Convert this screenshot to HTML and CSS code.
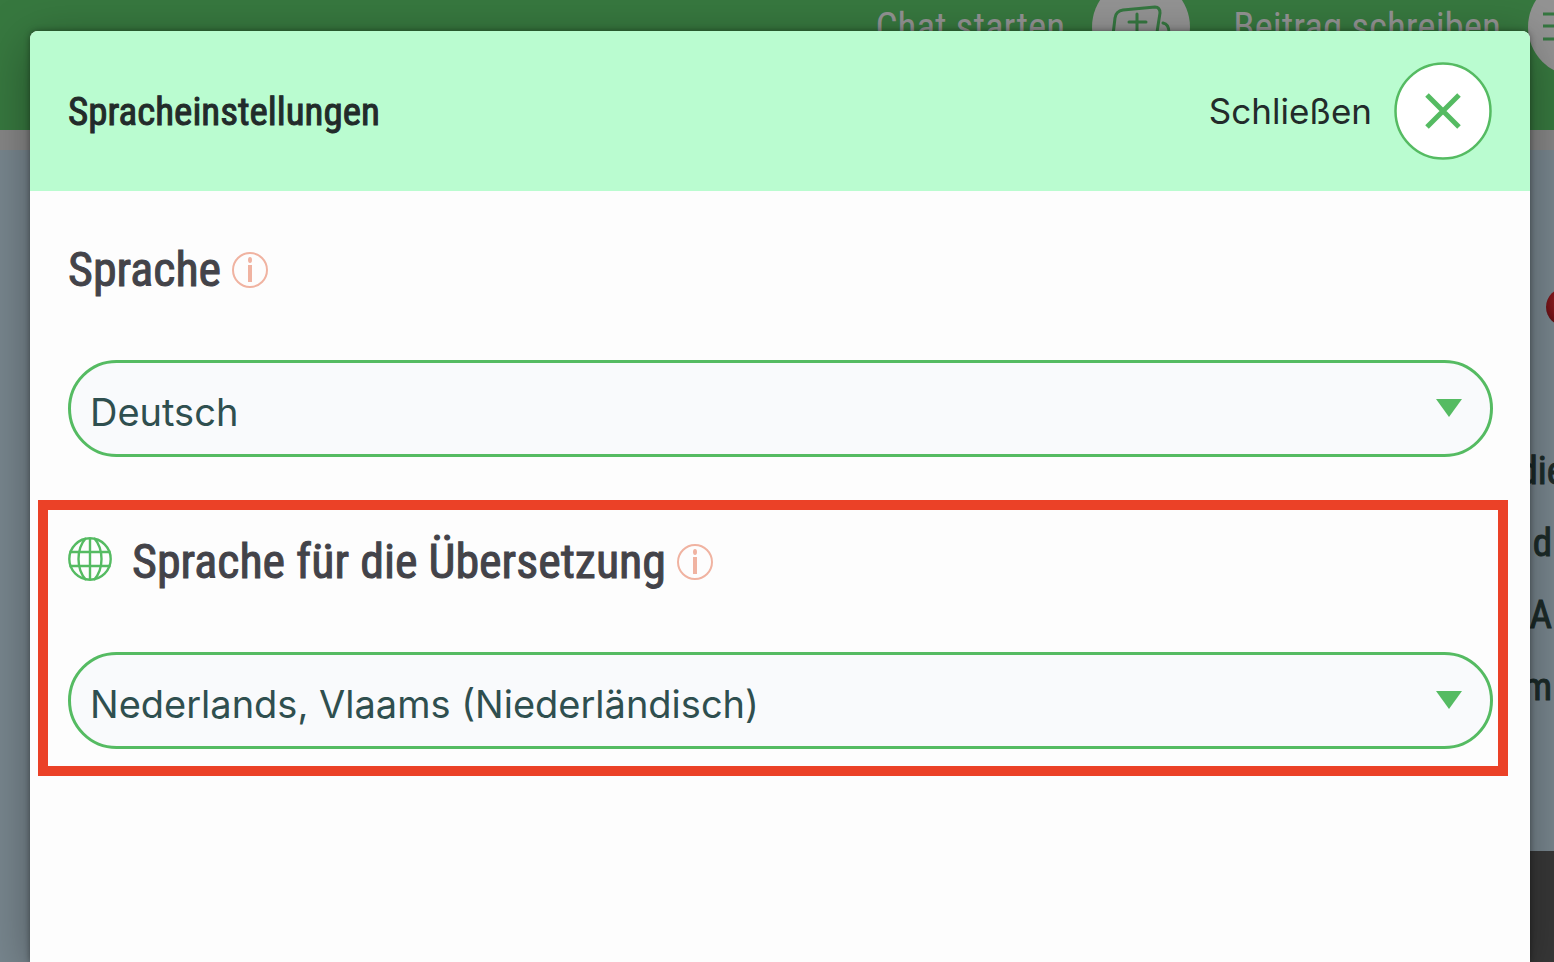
FILE: index.html
```html
<!DOCTYPE html>
<html lang="de">
<head>
<meta charset="utf-8">
<meta name="viewport" content="width=device-width, initial-scale=1">
<title>Spracheinstellungen</title>
<link rel="stylesheet" href="styles.css">
</head>
<body>
<div class="page">
  <header class="topbar">
    <nav class="nav">
      <a class="nav-link" href="#chat">Chat starten
        <span class="nav-circle">
          <svg width="98" height="98" viewBox="0 0 98 98" fill="none" stroke="#357740" stroke-width="3" stroke-linecap="round">
            <path d="M21 57 23 40Q24 33 31 32L63 29Q68 29 68 35L63 67Q62 71 57 71L26 73Q20 73 20 68Z"/>
            <path d="M45 36V57M37 44H54M71 45Q77 46 77 55L74 76 63 72"/>
          </svg>
        </span>
      </a>
      <a class="nav-link" href="#beitrag">Beitrag schreiben
        <span class="nav-circle">
          <svg width="98" height="98" viewBox="0 0 98 98" fill="none" stroke="#357740" stroke-width="3">
            <path d="M15 36H60M15 48H60M15 61H60"/>
          </svg>
        </span>
      </a>
    </nav>
  </header>
  <main class="content">
    <span class="ball"></span>
    <div class="copy">
      <span class="copy-first">die</span>
      <span>d</span>
      <span>A</span>
      <span>m</span>
    </div>
  </main>
  <footer class="footer"></footer>
</div>

<div class="overlay">
  <div class="dialog" role="dialog" aria-labelledby="dialog-title">
    <div class="dialog-head">
      <h1 class="dialog-title" id="dialog-title">Spracheinstellungen</h1>
      <button class="close" type="button">
        <span>Schließen</span>
        <svg class="close-icon" width="98" height="98" viewBox="0 0 98 98" fill="none" stroke="#55bb62">
          <circle cx="49" cy="49" r="47.500" fill="#fff" stroke-width="2.5"/>
          <path d="M33 33 65 65M65 33 33 65" stroke-width="5"/>
        </svg>
      </button>
    </div>
    <div class="dialog-body">
      <section class="setting">
        <div class="setting-head">
          <label class="setting-label" for="language">Sprache</label>
          <button class="info" type="button" aria-label="Info zur Sprache">
            <svg width="36" height="36" viewBox="0 0 36 36" fill="none"><circle cx="18" cy="18" r="17" stroke="#f0b3a1" stroke-width="2"/><path d="M18 13V30" stroke="#f0b3a1" stroke-width="4"/><ellipse cx="18" cy="8" rx="2" ry="3" fill="#f0b3a1"/></svg>
          </button>
        </div>
        <div class="select-wrap">
          <select class="select" id="language"><option>Deutsch</option></select>
          <svg class="arrow" width="26" height="18" viewBox="0 0 26 18"><path d="M0 0H26L13 18Z" fill="#55bb62"/></svg>
        </div>
      </section>
      <section class="setting setting-marked">
        <div class="setting-head">
          <svg class="globe" width="44" height="44" viewBox="0 0 44 44" fill="none" stroke="#55bb62" stroke-width="2.4"><circle cx="22" cy="22" r="20.7"/><path d="M22 1V43M1.500 15H42.500M1.500 29H42.500M18 1C8 12 8 32 18 43M26 1C36 12 36 32 26 43"/></svg>
          <label class="setting-label" for="translation">Sprache für die Übersetzung</label>
          <button class="info" type="button" aria-label="Info zur Übersetzung">
            <svg width="36" height="36" viewBox="0 0 36 36" fill="none"><circle cx="18" cy="18" r="17" stroke="#f0b3a1" stroke-width="2"/><path d="M18 13V30" stroke="#f0b3a1" stroke-width="4"/><ellipse cx="18" cy="8" rx="2" ry="3" fill="#f0b3a1"/></svg>
          </button>
        </div>
        <div class="select-wrap">
          <select class="select" id="translation"><option>Nederlands, Vlaams (Niederländisch)</option></select>
          <svg class="arrow" width="26" height="18" viewBox="0 0 26 18"><path d="M0 0H26L13 18Z" fill="#55bb62"/></svg>
        </div>
      </section>
    </div>
  </div>
</div>
</body>
</html>
```
FILE: styles.css
```css
* { box-sizing: border-box; }
body { margin: 0; font-family: "Roboto Condensed", "Liberation Sans Narrow", "Liberation Sans", sans-serif; }
button { border: 0; padding: 0; background: none; font: inherit; color: inherit; cursor: pointer; }
svg { display: block; flex: none; }

.page { height: 100vh; display: flex; flex-direction: column; overflow: hidden; background: #78868e; }
.topbar { flex: none; height: 150px; background: #37783f; border-bottom: 20px solid #868686; }
.nav { display: flex; justify-content: flex-end; gap: 43px; margin: -22px -72px 0 0; }
.nav-link { display: flex; align-items: center; gap: 27px; color: #939393; font-size: 39px; line-height: 48px; white-space: nowrap; text-decoration: none; }
.nav-circle { flex: none; border-radius: 50%; background: #939393; }
.content { flex: 1; display: flex; flex-direction: column; align-items: flex-end; overflow: hidden; padding-top: 138px; }
.ball { flex: none; width: 38px; height: 38px; margin-right: -30px; border-radius: 50%; background: radial-gradient(circle at 60% 35%, #b02c30, #7a1519 60%, #470a0d); }
.copy { display: flex; flex-direction: column; align-items: flex-end; margin-top: 109px; padding-right: 2px; color: #1c2b29; font-size: 39px; line-height: 72px; -webkit-text-stroke: 1px; }
.copy-first { margin-right: -13px; }
.footer { flex: none; width: 50%; height: 111px; margin-left: auto; background: #383838; }

.overlay { position: absolute; inset: 0; overflow: hidden; padding: 31px 24px 0 30px; }
.dialog { height: 100%; display: flex; flex-direction: column; border-radius: 8px 8px 0 0; background: #fdfdfd; box-shadow: 0 0 6px rgba(0, 0, 0, .4), 0 12px 50px rgba(0, 0, 0, .35); }
.dialog-head { display: flex; align-items: center; justify-content: space-between; padding: 31px 38px; border-radius: 8px 8px 0 0; background: #bafcd0; color: #222b2a; }
.dialog-title { margin: 0; padding-top: 2px; font-size: 39px; line-height: 48px; font-weight: 400; -webkit-text-stroke: 1px; }
.close { display: flex; align-items: center; gap: 22px; font-family: Inter, sans-serif; font-size: 35px; line-height: 48px; }
.dialog-body { display: flex; flex-direction: column; padding: 37px 22px 0 8px; }
.setting { padding: 0 15px 0 30px; }
.setting-marked { margin-top: 43px; padding: 10px 5px 17px 20px; border: 10px solid #eb4127; }
.setting-head { display: flex; align-items: center; height: 84px; color: #434349; }
.setting-label { font-size: 48px; line-height: 84px; -webkit-text-stroke: 1px; }
.info { margin-left: 11px; }
.globe { margin: 0 20px 6px 0; }
.select-wrap { position: relative; margin-top: 48px; }
.select { appearance: none; display: block; width: 100%; height: 97px; padding: 6px 60px 0 19px; border: 3px solid #55bb62; border-radius: 49px; background: #f9fafc; color: #2f4f4f; font-family: Inter, sans-serif; font-size: 38px; line-height: 48px; }
.arrow { position: absolute; right: 31px; top: 39px; pointer-events: none; }
```
